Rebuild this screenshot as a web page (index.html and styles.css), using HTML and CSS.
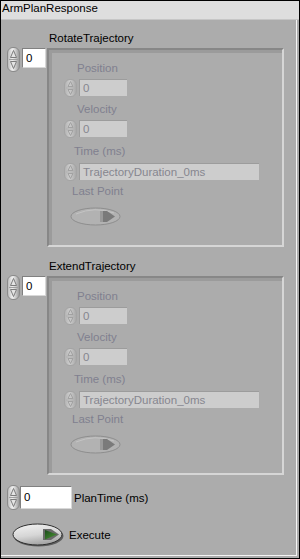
FILE: index.html
```html
<!DOCTYPE html>
<html lang="en">
<head>
    <meta charset="UTF-8">
    <meta name="viewport" content="width=device-width, initial-scale=1.0">
    <title>ArmPlanResponse</title>
    <link rel="stylesheet" href="styles.css">
</head>
<body>
    <div class="window">
        <div class="titlebar">ArmPlanResponse</div>
        <div class="panel">
            <div class="panel-body">

                <!-- RotateTrajectory -->
                <div class="traj">
                    <div class="num">
                        <div class="spin">
                            <svg width="11" height="23" viewBox="0 0 11 23">
                                <path d="M5.5 2.5 L8.5 9.5 H2.5 Z" fill="#e4e4e4" stroke="#7c7c7c"/>
                                <path d="M1 11.5 H10" stroke="#a0a0a0"/>
                                <path d="M5.5 20.5 L8.5 13.5 H2.5 Z" fill="#e4e4e4" stroke="#7c7c7c"/>
                            </svg>
                        </div>
                        <div class="num-box">0</div>
                    </div>
                    <div class="traj-group">
                        <div class="traj-label">RotateTrajectory</div>
                        <div class="traj-frame">
                            <div class="fld-label fld-pos">Position</div>
                            <div class="fld-ctl">
                                <div class="spin spin-sm">
                                    <svg width="11" height="16" viewBox="0 0 11 16">
                                        <path d="M5.5 1.5 L8 6.5 H3 Z" fill="none" stroke="#a2a2a2"/>
                                        <path d="M1 8 H10" stroke="#b0b0b0"/>
                                        <path d="M5.5 14.5 L8 9.5 H3 Z" fill="none" stroke="#a2a2a2"/>
                                    </svg>
                                </div>
                                <div class="off-box">0</div>
                            </div>
                            <div class="fld-label fld-vel">Velocity</div>
                            <div class="fld-ctl">
                                <div class="spin spin-sm">
                                    <svg width="11" height="16" viewBox="0 0 11 16">
                                        <path d="M5.5 1.5 L8 6.5 H3 Z" fill="none" stroke="#a2a2a2"/>
                                        <path d="M1 8 H10" stroke="#b0b0b0"/>
                                        <path d="M5.5 14.5 L8 9.5 H3 Z" fill="none" stroke="#a2a2a2"/>
                                    </svg>
                                </div>
                                <div class="off-box">0</div>
                            </div>
                            <div class="fld-label fld-time">Time (ms)</div>
                            <div class="fld-ctl fld-ctl-time">
                                <div class="spin spin-sm">
                                    <svg width="11" height="16" viewBox="0 0 11 16">
                                        <path d="M5.5 1.5 L8 6.5 H3 Z" fill="none" stroke="#a2a2a2"/>
                                        <path d="M1 8 H10" stroke="#b0b0b0"/>
                                        <path d="M5.5 14.5 L8 9.5 H3 Z" fill="none" stroke="#a2a2a2"/>
                                    </svg>
                                </div>
                                <div class="off-box off-box-wide">TrajectoryDuration_0ms</div>
                            </div>
                            <div class="fld-label fld-last">Last Point</div>
                            <div class="led-off">
                                <svg width="51" height="19" viewBox="0 0 51 19">
                                    <ellipse cx="25.5" cy="9.5" rx="24.5" ry="8.5" fill="#b2b2b2" stroke="#8e8e8e"/>
                                    <path d="M6 7 Q25 -1 44 6" fill="none" stroke="#c4c4c4"/>
                                    <path d="M30 4 H37 L45 9.5 L37 15 H30 Z" fill="#7a7a7a"/>
                                    <path d="M30 4 H33 V15 H30 Z" fill="#9a9a9a"/>
                                </svg>
                            </div>
                        </div>
                    </div>
                </div>

                <!-- ExtendTrajectory -->
                <div class="traj">
                    <div class="num">
                        <div class="spin">
                            <svg width="11" height="23" viewBox="0 0 11 23">
                                <path d="M5.5 2.5 L8.5 9.5 H2.5 Z" fill="#e4e4e4" stroke="#7c7c7c"/>
                                <path d="M1 11.5 H10" stroke="#a0a0a0"/>
                                <path d="M5.5 20.5 L8.5 13.5 H2.5 Z" fill="#e4e4e4" stroke="#7c7c7c"/>
                            </svg>
                        </div>
                        <div class="num-box">0</div>
                    </div>
                    <div class="traj-group">
                        <div class="traj-label">ExtendTrajectory</div>
                        <div class="traj-frame">
                            <div class="fld-label fld-pos">Position</div>
                            <div class="fld-ctl">
                                <div class="spin spin-sm">
                                    <svg width="11" height="16" viewBox="0 0 11 16">
                                        <path d="M5.5 1.5 L8 6.5 H3 Z" fill="none" stroke="#a2a2a2"/>
                                        <path d="M1 8 H10" stroke="#b0b0b0"/>
                                        <path d="M5.5 14.5 L8 9.5 H3 Z" fill="none" stroke="#a2a2a2"/>
                                    </svg>
                                </div>
                                <div class="off-box">0</div>
                            </div>
                            <div class="fld-label fld-vel">Velocity</div>
                            <div class="fld-ctl">
                                <div class="spin spin-sm">
                                    <svg width="11" height="16" viewBox="0 0 11 16">
                                        <path d="M5.5 1.5 L8 6.5 H3 Z" fill="none" stroke="#a2a2a2"/>
                                        <path d="M1 8 H10" stroke="#b0b0b0"/>
                                        <path d="M5.5 14.5 L8 9.5 H3 Z" fill="none" stroke="#a2a2a2"/>
                                    </svg>
                                </div>
                                <div class="off-box">0</div>
                            </div>
                            <div class="fld-label fld-time">Time (ms)</div>
                            <div class="fld-ctl fld-ctl-time">
                                <div class="spin spin-sm">
                                    <svg width="11" height="16" viewBox="0 0 11 16">
                                        <path d="M5.5 1.5 L8 6.5 H3 Z" fill="none" stroke="#a2a2a2"/>
                                        <path d="M1 8 H10" stroke="#b0b0b0"/>
                                        <path d="M5.5 14.5 L8 9.5 H3 Z" fill="none" stroke="#a2a2a2"/>
                                    </svg>
                                </div>
                                <div class="off-box off-box-wide">TrajectoryDuration_0ms</div>
                            </div>
                            <div class="fld-label fld-last">Last Point</div>
                            <div class="led-off">
                                <svg width="51" height="19" viewBox="0 0 51 19">
                                    <ellipse cx="25.5" cy="9.5" rx="24.5" ry="8.5" fill="#b2b2b2" stroke="#8e8e8e"/>
                                    <path d="M6 7 Q25 -1 44 6" fill="none" stroke="#c4c4c4"/>
                                    <path d="M30 4 H37 L45 9.5 L37 15 H30 Z" fill="#7a7a7a"/>
                                    <path d="M30 4 H33 V15 H30 Z" fill="#9a9a9a"/>
                                </svg>
                            </div>
                        </div>
                    </div>
                </div>

                <!-- PlanTime -->
                <div class="plan-row">
                    <div class="spin">
                        <svg width="11" height="23" viewBox="0 0 11 23">
                            <path d="M5.5 2.5 L8.5 9.5 H2.5 Z" fill="#e4e4e4" stroke="#7c7c7c"/>
                            <path d="M1 11.5 H10" stroke="#a0a0a0"/>
                            <path d="M5.5 20.5 L8.5 13.5 H2.5 Z" fill="#e4e4e4" stroke="#7c7c7c"/>
                        </svg>
                    </div>
                    <div class="num-box plan-box">0</div>
                    <div class="plan-label">PlanTime (ms)</div>
                </div>

                <!-- Execute -->
                <div class="exec-row">
                    <div class="led-on">
                        <svg width="52" height="24" viewBox="0 0 52 24">
                            <defs>
                                <linearGradient id="ledFace" x1="0" y1="0" x2="0.3" y2="1">
                                    <stop offset="0" stop-color="#f4f4f4"/>
                                    <stop offset="0.6" stop-color="#d6d6d6"/>
                                    <stop offset="1" stop-color="#a8a8a8"/>
                                </linearGradient>
                                <linearGradient id="ledGreen" x1="0" y1="0" x2="1" y2="1">
                                    <stop offset="0" stop-color="#1b4a1b"/>
                                    <stop offset="1" stop-color="#4e9a36"/>
                                </linearGradient>
                            </defs>
                            <ellipse cx="26.5" cy="13" rx="25" ry="10.5" fill="#5e5e5e"/>
                            <ellipse cx="25.5" cy="11.5" rx="24.5" ry="10.5" fill="url(#ledFace)" stroke="#2e2e2e"/>
                            <path d="M31 6 H39 L47 11.5 L39 17 H31 Z" fill="#6a6a6a"/>
                            <path d="M33 7 L45 11.5 L33 16.5 Z" fill="url(#ledGreen)"/>
                        </svg>
                    </div>
                    <div class="exec-label">Execute</div>
                </div>

            </div>
        </div>
    </div>
</body>
</html>
```

FILE: styles.css
```css
* {
    box-sizing: border-box;
}

body {
    margin: 0;
    font-family: "Liberation Sans", Arial, sans-serif;
    font-size: 11.5px;
    color: #000;
}

.window {
    width: 300px;
    height: 559px;
    border: 1px solid #000;
    display: flex;
    flex-direction: column;
    background: #acacac;
}

.titlebar {
    height: 19px;
    line-height: 15px;
    padding-left: 1px;
    background: #dedede;
    border-bottom: 1px solid #c6c6c6;
}

.panel {
    flex: 1;
    display: flex;
    padding: 0 2px 2px 0;
}

.panel-body {
    flex: 1;
    border-right: 1px solid #f4f4f4;
    border-bottom: 1px solid #f4f4f4;
    padding: 11px 0 0 6px;
}

/* trajectory clusters */
.traj {
    display: flex;
    align-items: flex-start;
}

.traj + .traj {
    margin-top: 12px;
}

.num {
    display: flex;
    align-items: flex-start;
    margin-top: 16px;
}

.spin {
    width: 13px;
    height: 25px;
    border: 1px solid #8a8a8a;
    border-radius: 6px;
    background: linear-gradient(90deg, #bdbdbd 0%, #efefef 38%, #d2d2d2 65%, #9c9c9c 100%);
}

.spin svg {
    display: block;
}

.spin-sm {
    height: 18px;
    border-color: #a4a4a4;
    background: linear-gradient(90deg, #b4b4b4 0%, #cbcbcb 40%, #bdbdbd 70%, #a8a8a8 100%);
}

.num-box {
    margin: 1px 0 0 2px;
    width: 24px;
    height: 20px;
    line-height: 18px;
    padding-left: 3px;
    background: #fff;
    border: 1px solid;
    border-color: #808080 #d8d8d8 #d8d8d8 #808080;
}

.traj-group {
    margin-left: 1px;
}

.traj-label {
    height: 14px;
    line-height: 14px;
    padding-left: 2px;
    margin-bottom: 3px;
}

.traj-frame {
    width: 237px;
    height: 199px;
    border: 2px solid;
    border-color: #878787 #d6d6d6 #d6d6d6 #878787;
    box-shadow: inset 3px 3px 0 #9b9b9b;
    padding-top: 11px;
}

/* disabled fields inside the clusters */
.fld-label {
    height: 14px;
    line-height: 14px;
    color: #80808f;
}

.fld-pos { margin-left: 28px; }
.fld-vel { margin: 5px 0 0 28px; }
.fld-time { margin: 6px 0 0 25px; }
.fld-last { margin: 3px 0 0 23px; }

.fld-ctl {
    display: flex;
    margin: 4px 0 0 15px;
}

.fld-ctl-time {
    margin-top: 5px;
}

.off-box {
    margin-left: 2px;
    width: 48px;
    height: 17px;
    line-height: 16px;
    padding-left: 3px;
    background: #cdcdcd;
    border-top: 1px solid #9c9c9c;
    border-left: 1px solid #9c9c9c;
    color: #86868f;
    white-space: nowrap;
}

.off-box-wide {
    width: 180px;
}

.led-off {
    margin: 9px 0 0 21px;
    height: 19px;
}

.led-off svg,
.led-on svg {
    display: block;
}

/* bottom controls */
.plan-row {
    display: flex;
    align-items: flex-start;
    margin-top: 10px;
}

.plan-box {
    margin: 1px 0 0 0;
    width: 52px;
    height: 23px;
    line-height: 21px;
}

.plan-label {
    margin: 6px 0 0 2px;
    line-height: 14px;
}

.exec-row {
    display: flex;
    align-items: flex-start;
    margin: 13px 0 0 5px;
}

.exec-label {
    margin: 5px 0 0 5px;
    line-height: 14px;
}
```
